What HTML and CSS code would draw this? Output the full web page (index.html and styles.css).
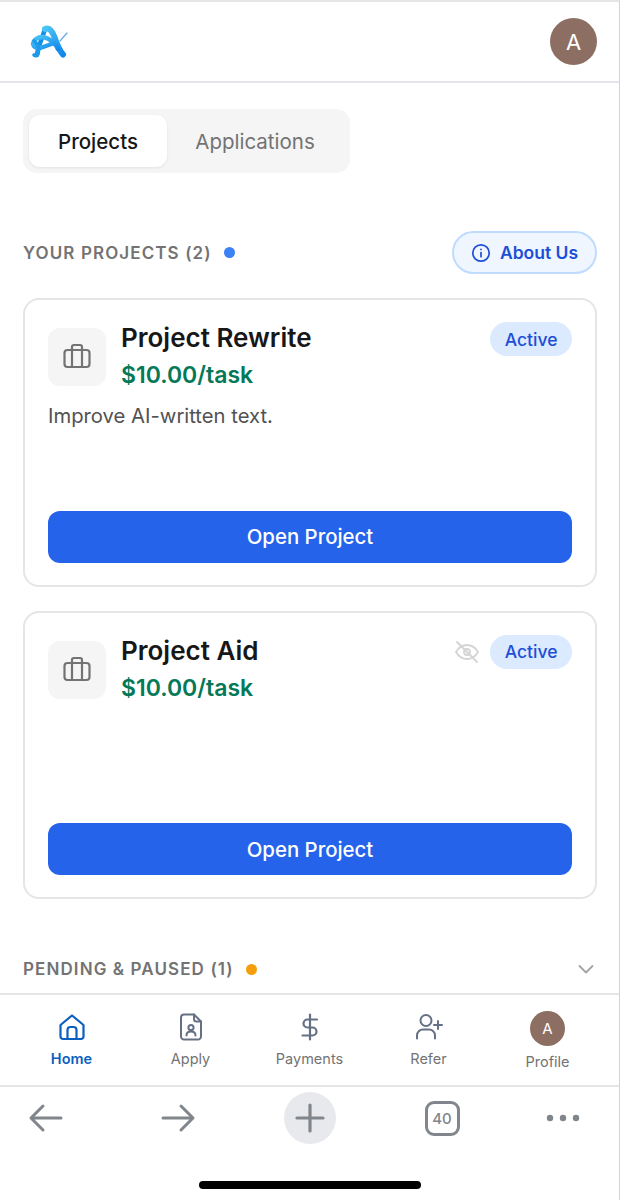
FILE: index.html
```html
<!DOCTYPE html>
<html lang="en">
<head>
<meta charset="utf-8">
<title>Projects</title>
<link rel="stylesheet" href="styles.css">
</head>
<body>
<div class="page">

  <header class="topbar">
    <svg class="logo" width="40" height="34" viewBox="0 0 40 34" fill="none">
      <defs>
        <linearGradient id="logo_grad" x1="0" y1="0" x2="1" y2="1">
          <stop offset="0" stop-color="#4cc4f5"/>
          <stop offset="1" stop-color="#1288ea"/>
        </linearGradient>
      </defs>
      <path d="M39 8 L32 16" stroke="#6aaee6" stroke-width="1.300" stroke-linecap="round"/>
      <path d="M17 4 C15 10 13 16 11 21 C10 25 9 28 9 30" stroke="#1590e8" stroke-width="4.500" stroke-linecap="round"/>
      <path d="M17 4 C21 2 24 6 26 11 C28 17 31 25 35 29.500" stroke="url(#logo_grad)" stroke-width="6" stroke-linecap="round"/>
      <path d="M30 24 C26 15 15 9 8 14 C3 18 5 23 11 23 C16 22 21 20 26 18" stroke="url(#logo_grad)" stroke-width="4.500" stroke-linecap="round"/>
      <path d="M6 16 C10 19 12 24 10 29 C9 31 7 31 6 30" stroke="#1d9be8" stroke-width="3.600" stroke-linecap="round"/>
    </svg>
    <div class="avatar">A</div>
  </header>

  <main class="content">
    <div class="tabs">
      <div class="tab tab-active">Projects</div>
      <div class="tab">Applications</div>
    </div>

    <div class="section-head">
      <div class="section-title">YOUR PROJECTS (2) <span class="dot dot-blue"></span></div>
      <div class="about">
        <svg width="20" height="20" viewBox="0 0 20 20" fill="none" stroke="#1d4ed8" stroke-width="1.700" stroke-linecap="round">
          <circle cx="10" cy="10" r="8.200"/>
          <path d="M10 9.500v4.200"/>
          <path d="M10 6.300v.1"/>
        </svg>
        About Us
      </div>
    </div>

    <section class="card">
      <div class="card-top">
        <div class="card-icon">
          <svg width="30" height="30" viewBox="0 0 30 30" fill="none" stroke="#737373" stroke-width="2.200" stroke-linejoin="round">
            <rect x="2.500" y="8" width="25" height="17" rx="3"/>
            <path d="M10 25V5a2 2 0 0 1 2-2h6a2 2 0 0 1 2 2v20"/>
          </svg>
        </div>
        <div class="card-info">
          <div class="card-title">Project Rewrite</div>
          <div class="card-price">$10.00/task</div>
        </div>
        <div class="badge">Active</div>
      </div>
      <p class="card-desc">Improve AI-written text.</p>
      <div class="open-btn">Open Project</div>
    </section>

    <section class="card">
      <div class="card-top">
        <div class="card-icon">
          <svg width="30" height="30" viewBox="0 0 30 30" fill="none" stroke="#737373" stroke-width="2.200" stroke-linejoin="round">
            <rect x="2.500" y="8" width="25" height="17" rx="3"/>
            <path d="M10 25V5a2 2 0 0 1 2-2h6a2 2 0 0 1 2 2v20"/>
          </svg>
        </div>
        <div class="card-info">
          <div class="card-title">Project Aid</div>
          <div class="card-price">$10.00/task</div>
        </div>
        <svg class="hidden-icon" width="24" height="24" viewBox="0 0 24 24" fill="none" stroke="#d4d4d4" stroke-width="1.800" stroke-linecap="round" stroke-linejoin="round">
          <path d="M1 12c2.700-4.700 6.500-7 11-7s8.300 2.300 11 7c-2.700 4.700-6.500 7-11 7s-8.300-2.300-11-7z"/>
          <circle cx="12" cy="12" r="3"/>
          <path d="M2 2l20 20"/>
        </svg>
        <div class="badge">Active</div>
      </div>
      <div class="open-btn">Open Project</div>
    </section>

    <div class="section-head pending">
      <div class="section-title">PENDING &amp; PAUSED (1) <span class="dot dot-orange"></span></div>
      <svg width="18" height="18" viewBox="0 0 18 18" fill="none" stroke="#a3a3a3" stroke-width="1.800" stroke-linecap="round" stroke-linejoin="round">
        <path d="M2.500 6l6.500 6.500L15.500 6"/>
      </svg>
    </div>
  </main>

  <nav class="bottom-nav">
    <div class="nav-item nav-active">
      <svg width="28" height="28" viewBox="0 0 28 28" fill="none" stroke="#0b5fc0" stroke-width="2.200" stroke-linejoin="round">
        <path d="M2.500 12L14 2.500 25.500 12v11.500a2.500 2.500 0 0 1-2.500 2.500H5a2.500 2.500 0 0 1-2.500-2.500z"/>
        <path d="M9.500 26V17a3 3 0 0 1 3-3h3a3 3 0 0 1 3 3v9"/>
      </svg>
      <span>Home</span>
    </div>
    <div class="nav-item">
      <svg width="28" height="28" viewBox="0 0 28 28" fill="none" stroke="#667085" stroke-width="2" stroke-linejoin="round" stroke-linecap="round">
        <path d="M17 1.500H7a3 3 0 0 0-3 3v19a3 3 0 0 0 3 3h14a3 3 0 0 0 3-3V8.500z"/>
        <path d="M17 1.500v4.500a2.500 2.500 0 0 0 2.500 2.500H24"/>
        <circle cx="14" cy="14.500" r="2.600"/>
        <path d="M9.500 22.500c0-2.500 2-4 4.500-4s4.500 1.500 4.500 4"/>
      </svg>
      <span>Apply</span>
    </div>
    <div class="nav-item">
      <svg width="28" height="28" viewBox="0 0 28 28" fill="none" stroke="#667085" stroke-width="2.200" stroke-linecap="round" stroke-linejoin="round">
        <path d="M14 1.500v25"/>
        <path d="M21 6.500h-9.500a4 4 0 0 0 0 8h5a4 4 0 0 1 0 8H6.500"/>
      </svg>
      <span>Payments</span>
    </div>
    <div class="nav-item">
      <svg width="28" height="28" viewBox="0 0 28 28" fill="none" stroke="#667085" stroke-width="2" stroke-linecap="round" stroke-linejoin="round">
        <circle cx="11" cy="7.500" r="5.500"/>
        <path d="M2 25.500v-3a6 6 0 0 1 6-6h6a6 6 0 0 1 6 6v3"/>
        <path d="M23 8v8M19 12h8"/>
      </svg>
      <span>Refer</span>
    </div>
    <div class="nav-item nav-profile">
      <div class="avatar avatar-small">A</div>
      <span>Profile</span>
    </div>
  </nav>

  <div class="browser-bar">
    <div class="browser-btn">
      <svg width="36" height="30" viewBox="0 0 36 30" fill="none" stroke="#80868b" stroke-width="3" stroke-linecap="round" stroke-linejoin="round">
        <path d="M33 15H3M15 3L3 15l12 12"/>
      </svg>
    </div>
    <div class="browser-btn">
      <svg width="36" height="30" viewBox="0 0 36 30" fill="none" stroke="#80868b" stroke-width="3" stroke-linecap="round" stroke-linejoin="round">
        <path d="M3 15h30M21 3l12 12-12 12"/>
      </svg>
    </div>
    <div class="browser-btn">
      <div class="plus-circle">
        <svg width="30" height="30" viewBox="0 0 30 30" fill="none" stroke="#80868b" stroke-width="3.200" stroke-linecap="round">
          <path d="M15 2v26M2 15h26"/>
        </svg>
      </div>
    </div>
    <div class="browser-btn"><div class="tab-count">40</div></div>
    <div class="browser-btn browser-more">
      <svg width="34" height="10" viewBox="0 0 34 10" fill="#80868b">
        <circle cx="4" cy="5" r="3.200"/>
        <circle cx="17" cy="5" r="3.200"/>
        <circle cx="30" cy="5" r="3.200"/>
      </svg>
    </div>
  </div>

  <div class="home-area"><div class="home-bar"></div></div>

</div>
</body>
</html>
```

FILE: styles.css
```css
* {
  box-sizing: border-box;
}
body {
  margin: 0;
  background-color: #fff;
  font-family: Inter, "Liberation Sans", sans-serif;
}
.page {
  width: 620px;
  height: 1200px;
  display: flex;
  flex-direction: column;
  overflow: hidden;
  border-top: 2px solid #e5e5e7;
  border-right: 1px solid #d4d4d6;
}
.topbar {
  height: 81px;
  flex: none;
  display: flex;
  align-items: center;
  justify-content: space-between;
  padding: 0 22px 0 28px;
  border-bottom: 2px solid #e4e5ea;
}
.avatar {
  width: 47px;
  height: 47px;
  flex: none;
  border-radius: 50%;
  background-color: #8d6e63;
  color: #fff;
  font-size: 22px;
  display: flex;
  align-items: center;
  justify-content: center;
}
.avatar-small {
  width: 35px;
  height: 35px;
  font-size: 15px;
}
.content {
  flex: none;
  height: 910px;
  overflow: hidden;
  padding: 26px 22px 0 23px;
}
.tabs {
  width: 327px;
  height: 64px;
  display: flex;
  padding: 6px;
  background-color: #f5f5f5;
  border-radius: 14px;
}
.tab {
  font-size: 20.500px;
  color: #737373;
  display: flex;
  align-items: center;
  justify-content: center;
  width: 176px;
}
.tab-active {
  width: 138px;
  background-color: #fff;
  color: #171717;
  font-weight: 500;
  border-radius: 11px;
  box-shadow: 0 1px 3px rgba(0, 0, 0, 0.08);
}
.section-head {
  display: flex;
  align-items: center;
  justify-content: space-between;
  margin-top: 58px;
  height: 43px;
  margin-bottom: 24px;
}
.section-title {
  display: flex;
  align-items: center;
  gap: 12px;
  font-size: 17px;
  font-weight: 600;
  letter-spacing: 1.100px;
  color: #737373;
  white-space: nowrap;
}
.dot {
  width: 11px;
  height: 11px;
  border-radius: 50%;
}
.dot-blue {
  background-color: #3b82f6;
}
.dot-orange {
  background-color: #f59e0b;
}
.about {
  width: 145px;
  height: 43px;
  display: flex;
  align-items: center;
  justify-content: center;
  gap: 9px;
  background-color: #eff6ff;
  border: 2px solid #bfdbfe;
  border-radius: 22px;
  color: #1d4ed8;
  font-size: 17.500px;
  font-weight: 600;
}
.card {
  height: 288.500px;
  display: flex;
  flex-direction: column;
  padding: 23px 23px 22px;
  margin-bottom: 24px;
  border: 2px solid #e5e5e5;
  border-radius: 16px;
}
.card-top {
  display: flex;
  align-items: flex-start;
}
.card-icon {
  width: 58px;
  height: 58px;
  flex: none;
  margin-top: 5px;
  display: flex;
  align-items: center;
  justify-content: center;
  background-color: #f5f5f5;
  border-radius: 12px;
}
.card-info {
  flex: 1;
  margin: -1px 0 0 15px;
}
.card-title {
  font-size: 26px;
  font-weight: 600;
  line-height: 32px;
  color: #171717;
}
.card-price {
  font-size: 23px;
  font-weight: 600;
  line-height: 30px;
  margin-top: 6px;
  color: #047857;
}
.badge {
  height: 34px;
  margin-top: -1px;
  padding: 0 14.500px;
  display: flex;
  align-items: center;
  background-color: #dbeafe;
  border-radius: 17px;
  color: #1d4ed8;
  font-size: 17.500px;
  font-weight: 500;
}
.hidden-icon {
  margin: 4px 11px 0 0;
}
.card-desc {
  margin: 11px 0 0;
  font-size: 20.250px;
  line-height: 30px;
  color: #525252;
}
.open-btn {
  height: 52px;
  margin-top: auto;
  display: flex;
  align-items: center;
  justify-content: center;
  background-color: #2563eb;
  border-radius: 12px;
  color: #fff;
  font-size: 20.400px;
  font-weight: 500;
}
.pending {
  margin-top: 58px;
  margin-bottom: 0;
  height: 24px;
}
.pending svg {
  margin-right: 2px;
}
.bottom-nav {
  height: 94px;
  flex: none;
  display: flex;
  padding: 0 12px;
  border-top: 2px solid #e5e5e7;
  border-bottom: 2px solid #e5e5e7;
}
.nav-item {
  flex: 1;
  display: flex;
  flex-direction: column;
  align-items: center;
  padding-top: 18px;
  gap: 9px;
  font-size: 14.500px;
  color: #737373;
}
.nav-active {
  color: #0b5fc0;
  font-weight: 600;
}
.nav-profile {
  padding-top: 16px;
  gap: 7px;
}
.browser-bar {
  height: 62px;
  flex: none;
  display: flex;
  align-items: center;
  gap: 96px;
  padding-left: 28px;
}
.browser-btn {
  width: 36px;
  flex: none;
  display: flex;
  align-items: center;
  justify-content: center;
}
.browser-more {
  margin-left: -11px;
}
.plus-circle {
  width: 52px;
  height: 52px;
  flex: none;
  display: flex;
  align-items: center;
  justify-content: center;
  background-color: #e8e9ec;
  border-radius: 50%;
}
.tab-count {
  width: 35px;
  height: 35px;
  flex: none;
  display: flex;
  align-items: center;
  justify-content: center;
  border: 3px solid #80868b;
  border-radius: 9px;
  color: #80868b;
  font-size: 15px;
  font-weight: 500;
}
.home-area {
  flex: 1;
  display: flex;
  justify-content: center;
  padding-top: 32px;
}
.home-bar {
  width: 222px;
  height: 8px;
  background-color: #000;
  border-radius: 4px;
}
```
